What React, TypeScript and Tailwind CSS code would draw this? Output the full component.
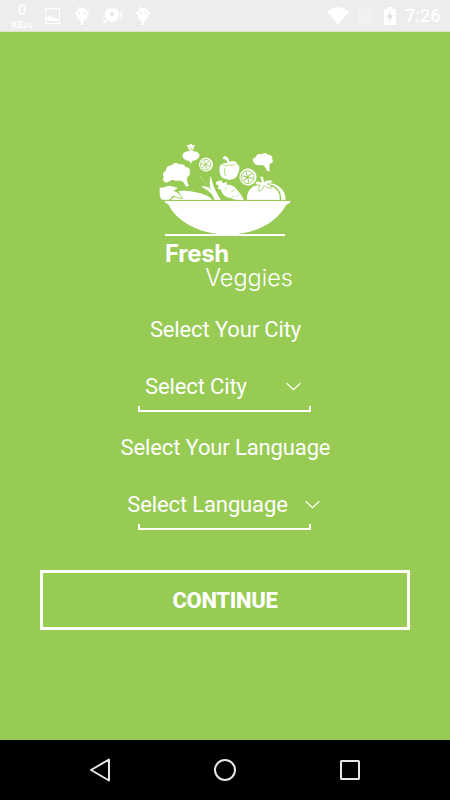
import { useState } from "react";

interface PickerProps {
  label: string;
  className: string;
}

function Picker({ label, className }: PickerProps) {
  const [open, setOpen] = useState(false);

  return (
    <button
      onClick={() => setOpen(!open)}
      className="flex h-[43px] w-full flex-col items-center pr-[2px]"
    >
      <span className={`flex h-[34px] items-center ${className}`}>
        <span className="whitespace-nowrap">{label}</span>
        <svg width="15" height="9" viewBox="0 0 15 9" fill="none" stroke="white" strokeWidth="1.2">
          <path d="M.7 1.2 7.5 7.6l6.8-6.4" />
        </svg>
      </span>
      <span className="mt-[3px] h-[6px] w-[173px] border-x-2 border-b-2 border-white" />
    </button>
  );
}

function Droid() {
  return (
    <svg width="14" height="20" viewBox="0 0 14 20" fill="white">
      <path d="m3 0 2 3M11 0 9 3" stroke="white" />
      <path d="M1.5 6C1.8 3.3 4 2 7 2s5.2 1.3 5.5 4H14v2h-1.200c0 3.500-2 6-4.600 6.600V19H5.800v-4.400C3.200 14 1.200 11.500 1.200 8H0V6z" />
      <circle cx="4.5" cy="7" r=".8" fill="#d8d8d8" />
      <circle cx="9.5" cy="7" r=".8" fill="#d8d8d8" />
    </svg>
  );
}

function StatusBar() {
  return (
    <div className="flex h-[32px] shrink-0 items-center border-b border-[#dce5ce] bg-[#ededed] text-white">
      <div className="ml-[10px] w-[24px] text-center font-medium">
        <div className="text-[15px] leading-[17px]">0</div>
        <div className="font-['Inter',sans-serif] text-[9px] font-semibold leading-[11px] tracking-[0.2px]">KB/s</div>
      </div>
      <svg className="ml-[11px]" width="15" height="16" viewBox="0 0 15 16">
        <rect x=".6" y=".6" width="13.8" height="14.8" fill="none" stroke="white" strokeWidth="1.2" />
        <path d="M2 13V9.500l3-2 3.500 3 2-1.500 2.500 2V13z" fill="white" />
      </svg>
      <div className="ml-[15px]">
        <Droid />
      </div>
      <svg className="ml-[14px]" width="20" height="17" viewBox="0 0 20 17" fill="white">
        <circle cx="9" cy="7.5" r="7.3" />
        <circle cx="2" cy="14.5" r="2" />
        <circle cx="9" cy="7" r="2" fill="#e6e6e6" />
        <path d="M17.500 5h1.800v5h-1.800zM17.500 11h1.800v2h-1.800z" />
      </svg>
      <div className="ml-[13px]">
        <Droid />
      </div>
      <svg className="ml-[177px]" width="22" height="18" viewBox="0 0 22 18" fill="white">
        <path d="M0 4.600Q11-4.200 22 4.600L11 18z" />
      </svg>
      <svg className="ml-[8px]" width="16" height="18" viewBox="0 0 16 18">
        <path d="M6 1h9v14L4 4zM2 5l12 12H2z" fill="#f1f1f1" />
        <path d="m1 2 14 15" stroke="#f5f5f5" strokeWidth="1.5" />
      </svg>
      <svg className="ml-[11px]" width="12" height="18" viewBox="0 0 12 18">
        <path d="M3.500 0h5v2H12v16H0V2h3.500z" fill="white" />
        <path d="M7 4 2.700 10.500h2.800L4.800 15l4.500-6.500H6.400z" fill="#dedede" />
      </svg>
      <span className="ml-[9px] text-[18px] font-medium leading-none">7:26</span>
    </div>
  );
}

function CitrusSlice({ x, y, r }: { x: number; y: number; r: number }) {
  return (
    <g transform={`translate(${x} ${y}) rotate(-15) scale(${r / 8})`}>
      <circle r="8" fill="white" />
      <circle cx="-.5" r="6" fill="none" stroke="#97cb53" strokeWidth=".8" />
      <path d="M-.5-5V5M-5-2.500 4 2.500M4-2.500-5 2.500" stroke="#97cb53" strokeWidth=".9" />
    </g>
  );
}

function VeggieBowl() {
  return (
    <svg width="140" height="97" viewBox="0 0 140 97" fill="white">
      {/* radish */}
      <path d="M34.500 11 31.500 4.500l2.500 1 1-1.500h1.500l1 1.500 2.500-1-2.500 6.500c4 .2 7 1.800 7 4.500-.3 3.300-4.200 5-7.500 5.500L35.700 24l-1.200-3c-3.700-.5-7-2.300-7-5.500.2-2.700 3-4.300 7-4.500z" />
      <path d="m34.500 6.500.7 4M37 6.500l-.5 4" stroke="#97cb53" strokeWidth=".5" />
      <CitrusSlice x={51} y={24.5} r={7} />
      {/* large floret */}
      <path d="M10.500 42.500c-2.500-.8-3-3.500-1.700-5.500-1.800-3 0-5.500 2.200-6.500 0-3.500 3-5.500 5.500-5 2-3.300 6-3 8-1 3-.8 5.500.5 6.300 2.700 3-.2 4.700 2 4 5 .7 2.500-.8 4-2.300 4.500-1 3.300-.3 6 1.500 9-1 1-2.500.8-3.500.2C29.500 42.500 27.500 40.800 24 40.500c-3 .5-5 .2-7-.8-2 1.500-4 2.800-6.500 2.800z" />
      {/* eggplant */}
      <path d="M23.500 51.200c7-1.200 14 0 20.500 1.800 6 1.500 11 3.500 13.500 7H16l3.500-3.500L27 58z" />
      <path d="M4.500 47.500c4 1 7-1.500 10.500-1.700L23 48l-4 2.500c4 1.200 6.500 4 8.500 8-4.500-.5-7-1.500-9.500-2.500-1 2.500-3 4-7 4l-4.500-.5c-2.500-4-1.500-8-2-12z" />
      <path d="M19 50.500c4 1.200 6.500 4 8.500 8-4.500-.5-7-1.500-9.500-2.500l-3 4" fill="none" stroke="#97cb53" strokeWidth=".9" />
      {/* spring onion */}
      <path d="M41.500 33.500c6.500 5 10.500 10.500 14 16.500-1-5-1-9.500.2-14.500 1.800 9 4.800 16 10.300 24.500h-6.500c-2-7-7.500-10.500-13.500-13.500 3.500-.5 6 .2 8.500 1.500C51 43 46.500 38 41.500 33.500z" />
      {/* pepper */}
      <path d="M72.500 23c-.5-2.500-2-4-5-4.500L69 16c3 .2 5 2.500 5.500 6 3.500-2 7-.5 7.500 2 3 1.500 2.800 5.500 1.500 8.500-1.200 4-3.500 6.800-6.500 6.500-1.800 1.500-4 1.300-5.200-.2-4.500.7-7-3.300-7.300-7.800C63.500 26 66 22.500 72.500 23z" />
      <path d="M67 24.500c2.500 1.500 4.500 1.800 6.500 0 2.500 1.500 5 1.300 7-.5M70 28c-1 3-.5 6 .5 8" fill="none" stroke="#97cb53" strokeWidth=".7" />
      <CitrusSlice x={93} y={37} r={8.5} />
      {/* small floret */}
      <path d="M98.500 22c-1.800-2.500 0-4.500 2.300-4.500.5-3.200 3-4 5.200-3 3-2 6-1.500 7 .2 3-.2 5 2 4.200 4.500 1.800 2.500-.2 4.500-2.200 4.300-1 2.500-.8 4.500 0 7.700l-3.500-.7c-.8-3.500-2-5-5-5.500-4 .8-7-.3-8-3z" />
      {/* carrot */}
      <path d="m61.500 41.500 5-1.200 1.500 3 4-1.500-.5 3c5-.5 9 2 11.500 6.200 2.800 3 4.500 6 6 9-4.500.5-9 .2-12.500-1.500-5.500-1-10-4-10.500-9l-3.500-1 1.500-2.500-3-2z" />
      <path d="m71.500 47.500-2 2M79 49.500l-2.500 2.500M76 58.500l2.500-2.500M84 54.500l-2 2" stroke="#97cb53" strokeWidth=".7" />
      {/* tomato */}
      <path d="M92 60c-.5-7 3-14.500 12-15 5-3 11-3 16-.8 7 3.300 11 8.500 10.500 15.800z" />
      <path d="M115.500 45.200c7 2.500 10.500 8 10 15" fill="none" stroke="#97cb53" strokeWidth="1.300" />
      <path d="M100 41.500c2.500-.8 4.200-.2 6 .8.700-2-.2-3.800-1.500-5.800l3-.5c1 2 1.800 3.500 1.500 5.500 3-1.500 5.500-2 9-1-1 2.500-3 3.500-5.500 3.500 2 .8 3.500 2 4 4-3 .5-5.500-.5-7.500-2.500-.8 2.800-2.200 4.800-5 5.800-.5-2.500 0-4.500 1-6.300-2.500.3-4 .2-5-3.500z" stroke="#97cb53" strokeWidth=".8" />
      {/* bowl and stand */}
      <path d="M9 60.400h126" stroke="#97cb53" strokeWidth=".9" />
      <path d="M9.500 61h126l-1 2.500-3 1C121 84 98 94.500 73 94.500S23 84 13.500 64.500L10.500 63z" />
      <path d="M10 95h120" stroke="white" strokeWidth="2" />
    </svg>
  );
}

function NavBar() {
  return (
    <div className="flex h-[60px] shrink-0 items-center justify-between bg-black px-[89px]">
      <svg width="22" height="26" viewBox="0 0 22 26" fill="none" stroke="#e6e6e6" strokeWidth="2" strokeLinejoin="round">
        <path d="M20 2.500v21L2 13z" />
      </svg>
      <svg width="24" height="24" viewBox="0 0 24 24" fill="none" stroke="#e6e6e6" strokeWidth="2">
        <circle cx="12" cy="12" r="10" />
      </svg>
      <svg width="22" height="22" viewBox="0 0 22 22" fill="none" stroke="#e6e6e6" strokeWidth="2">
        <rect x="2" y="2" width="18" height="18" rx=".5" />
      </svg>
    </div>
  );
}

export default function App() {
  return (
    <div className="flex h-[800px] w-[450px] flex-col overflow-hidden bg-[#97cb53] font-['Roboto',sans-serif] text-white">
      <StatusBar />

      <main className="flex flex-1 flex-col items-center pt-[108px]">
        <div className="flex w-[140px] flex-col">
          <VeggieBowl />
          <div className="mt-[4px] pl-[10px] font-['Inter',sans-serif] text-[24px] font-bold leading-[25px] tracking-[-0.3px]">
            Fresh
          </div>
          <div className="pr-[2px] text-right font-['Inter',sans-serif] text-[23.5px] font-light leading-[23px]">
            Veggies
          </div>
        </div>

        <div className="mt-[28px] pl-px text-[22px] leading-[26px] tracking-[-0.13px]">Select Your City</div>
        <div className="mt-[26px] w-full text-[22px] tracking-[-0.13px]">
          <Picker label="Select City" className="gap-[39px] pr-[2px]" />
        </div>

        <div className="mt-[23px] pl-px text-[22px] leading-[26px] tracking-[-0.13px]">Select Your Language</div>
        <div className="mt-[26px] w-full text-[22px] tracking-[-0.13px]">
          <Picker label="Select Language" className="gap-[17px] pr-px" />
        </div>

        <button className="mt-[40px] h-[60px] w-[370px] border-[3px] border-white text-[22px] font-extrabold tracking-[-0.3px]">
          CONTINUE
        </button>
      </main>

      <NavBar />
    </div>
  );
}
